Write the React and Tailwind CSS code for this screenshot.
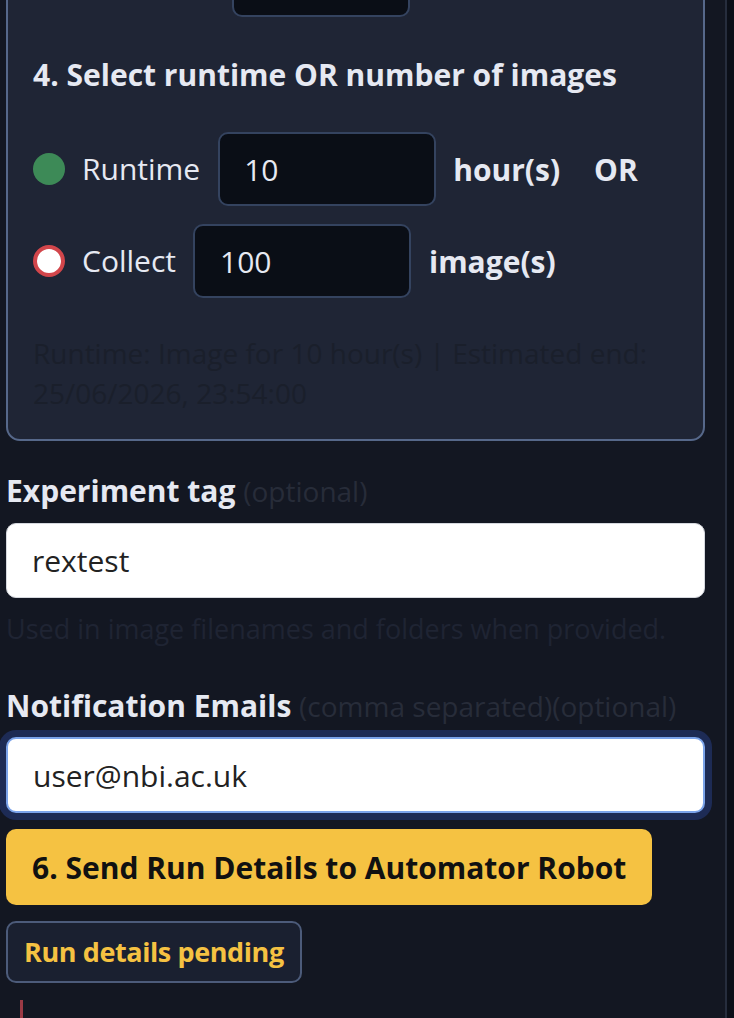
import React, { useState } from 'react';

const font = { fontFamily: '"Open Sans", Lato, "Liberation Sans", sans-serif' };

function Radio({ checked }) {
  return checked ? (
    <span className="block h-[32px] w-[32px] shrink-0 rounded-full bg-[#3d8a57]" />
  ) : (
    <span className="block h-[32px] w-[32px] shrink-0 rounded-full border-[4px] border-[#d2464b] bg-white" />
  );
}

export default function App() {
  const [hours, setHours] = useState('10');
  const [images, setImages] = useState('100');
  const [tag, setTag] = useState('rextest');
  const [emails, setEmails] = useState('user@nbi.ac.uk');

  return (
    <div className="flex min-h-[1018px] overflow-hidden bg-[#0b0f18] text-[30px] text-[#e6e9f2]" style={font}>
      {/* main column */}
      <div className="w-[727px] shrink-0 border-r-2 border-[#262d3d] bg-[#131722] pl-[6px] pr-[20px]">
        {/* Step 3/4 panel */}
        <div className="-mt-[100px] rounded-[14px] border-2 border-[#56688a] bg-[#1f2535] px-[25px] pb-[26px] pt-[41px]">
          <div className="ml-[199px] h-[74px] w-[178px] rounded-[10px] border-2 border-[#34435f] bg-[#0a0e16]" />

          <h3 className="mt-[38px] text-[30px] font-bold leading-[40px]">4. Select runtime OR number of images</h3>

          <div className="mt-[37px] flex items-center">
            <Radio checked />
            <span className="ml-[17px] mr-[18px] leading-[40px]">Runtime</span>
            <input
              value={hours}
              onChange={(e) => setHours(e.target.value)}
              className="h-[74px] w-[218px] rounded-[10px] border-2 border-[#34435f] bg-[#0a0e16] px-[24px] text-[30px] text-[#e6e9f2] outline-none"
            />
            <span className="ml-[17px] font-bold">hour(s)</span>
            <span className="ml-[34px] font-bold">OR</span>
          </div>

          <div className="mt-[18px] flex items-center">
            <Radio />
            <span className="ml-[17px] mr-[17px] leading-[40px]">Collect</span>
            <input
              value={images}
              onChange={(e) => setImages(e.target.value)}
              className="h-[74px] w-[218px] rounded-[10px] border-2 border-[#34435f] bg-[#0a0e16] px-[25px] text-[30px] text-[#e6e9f2] outline-none"
            />
            <span className="ml-[18px] font-bold">image(s)</span>
          </div>

          <p className="mt-[35px] text-[28px] leading-[40px] text-[#1a1f2b]">
            Runtime: Image for 10 hour(s) | Estimated end: 25/06/2026, 23:54:00
          </p>
        </div>

        {/* Experiment tag */}
        <label className="mt-[30px] block leading-[40px]">
          <span className="font-bold">Experiment tag</span>{' '}
          <span className="text-[28px] text-[#272c39]">(optional)</span>
        </label>
        <input
          value={tag}
          onChange={(e) => setTag(e.target.value)}
          className="mt-[12px] h-[75px] w-full rounded-[10px] border border-[#d5d8de] bg-white px-[25px] text-[30px] text-[#222] outline-none"
        />
        <p className="mt-[11px] text-[27px] leading-[40px] text-[#1f2433]">Used in image filenames and folders when provided.</p>

        {/* Notification emails */}
        <label className="mt-[37px] block leading-[40px]">
          <span className="font-bold">Notification Emails</span>{' '}
          <span className="text-[28px] text-[#272c39]">(comma separated)(optional)</span>
        </label>
        <input
          value={emails}
          onChange={(e) => setEmails(e.target.value)}
          className="mt-[11px] h-[76px] w-full rounded-[10px] border-2 border-[#7ba3ea] bg-white px-[25px] text-[30px] text-[#222] outline-none ring-[7px] ring-[#1d2b55]"
        />

        <button className="mt-[16px] block h-[76px] rounded-[10px] bg-[#f5c242] px-[26px] text-[30px] font-bold text-[#111]">
          6. Send Run Details to Automator Robot
        </button>

        <div className="mt-[16px] inline-flex h-[62px] items-center rounded-[10px] border-2 border-[#4c5b7a] bg-[#1a2030] px-[16px] text-[27px] font-bold tracking-[-0.4px] text-[#f5c242]">
          Run details pending
        </div>

        <div className="ml-[14px] mt-[17px] h-[60px] border-l-[3px] border-[#9b3a45]" />
      </div>
      <div className="flex-1" />
    </div>
  );
}
